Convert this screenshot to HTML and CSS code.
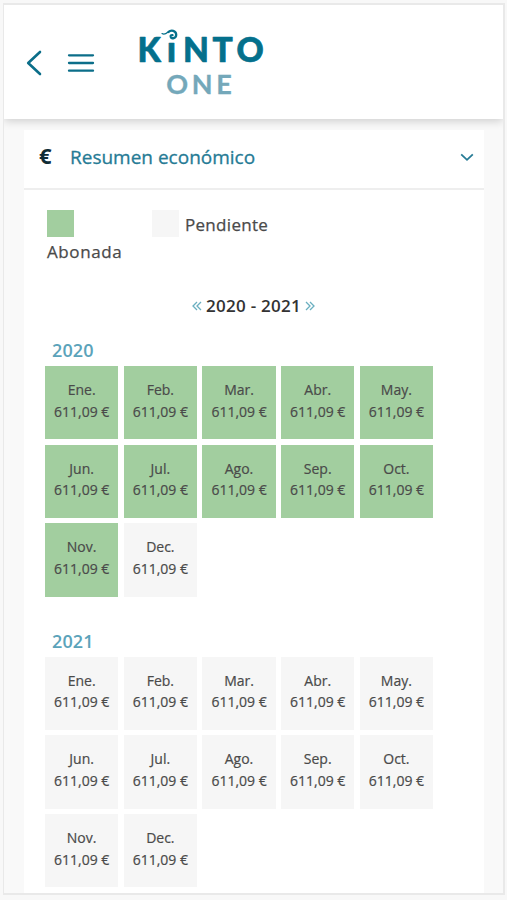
FILE: index.html
```
<!DOCTYPE html>
<html lang="es">
<head>
<meta charset="utf-8">
<title>Kinto One</title>
<link rel="stylesheet" href="styles.css">
</head>
<body>
<div class="frame">
  <header class="header">
    <svg class="back" width="16" height="26" viewBox="0 0 16 26"><path d="M14 2 2.2 13 14 24"/></svg>
    <svg class="menu" width="28" height="22" viewBox="0 0 28 22"><path d="M2 3.3h24M2 11h24M2 18.7h24"/></svg>
    <svg class="logo" width="140" height="76" viewBox="0 0 140 76">
      <text class="kinto" x="3.6 32.8 49 78.500 102.600" y="37.800">K<tspan class="logo-i">ı</tspan>NTO</text>
      <path class="curl-tail" d="M28 9.600c3.500 2 5.500-1.600 7-2.400"/>
      <path class="curl" d="M34.500 8c2.500-2.400 7.500-1.600 7.700 2.600.1 3.800-4.700 4.700-5.500 2.200-.3-1.200.6-2 1.800-1.700"/>
      <text class="one" x="32.300 57.800 82.300" y="69.500">ONE</text>
    </svg>
  </header>
  <main class="card">
    <div class="summary">
      <span class="euro">€</span>
      <h1 class="title">Resumen económico</h1>
      <svg class="chevron" width="14" height="10" viewBox="0 0 14 10"><path d="m1.200 2.300 5.800 5.500 5.800-5.500"/></svg>
    </div>
    <div class="legend">
      <div class="legend-paid"><i class="swatch paid"></i><span class="label-paid">Abonada</span></div>
      <div class="legend-pending"><i class="swatch"></i><span class="label-pending">Pendiente</span></div>
    </div>
    <div class="range">
      <svg width="10" height="10" viewBox="0 0 10 10"><path d="M5 1 1 5l4 4M9 1 5 5l4 4"/></svg>
      <span class="years">2020 - 2021</span>
      <svg width="10" height="10" viewBox="0 0 10 10"><path d="m1 1 4 4-4 4M5 1l4 4-4 4"/></svg>
    </div>
    <h2 class="year">2020</h2>
    <div class="grid">
      <div class="tile paid">Ene.<b>611,09 €</b></div>
      <div class="tile paid">Feb.<b>611,09 €</b></div>
      <div class="tile paid">Mar.<b>611,09 €</b></div>
      <div class="tile paid">Abr.<b>611,09 €</b></div>
      <div class="tile paid">May.<b>611,09 €</b></div>
      <div class="tile paid">Jun.<b>611,09 €</b></div>
      <div class="tile paid">Jul.<b>611,09 €</b></div>
      <div class="tile paid">Ago.<b>611,09 €</b></div>
      <div class="tile paid">Sep.<b>611,09 €</b></div>
      <div class="tile paid">Oct.<b>611,09 €</b></div>
      <div class="tile paid">Nov.<b>611,09 €</b></div>
      <div class="tile">Dec.<b>611,09 €</b></div>
    </div>
    <h2 class="year second">2021</h2>
    <div class="grid">
      <div class="tile">Ene.<b>611,09 €</b></div>
      <div class="tile">Feb.<b>611,09 €</b></div>
      <div class="tile">Mar.<b>611,09 €</b></div>
      <div class="tile">Abr.<b>611,09 €</b></div>
      <div class="tile">May.<b>611,09 €</b></div>
      <div class="tile">Jun.<b>611,09 €</b></div>
      <div class="tile">Jul.<b>611,09 €</b></div>
      <div class="tile">Ago.<b>611,09 €</b></div>
      <div class="tile">Sep.<b>611,09 €</b></div>
      <div class="tile">Oct.<b>611,09 €</b></div>
      <div class="tile">Nov.<b>611,09 €</b></div>
      <div class="tile">Dec.<b>611,09 €</b></div>
    </div>
  </main>
</div>
</body>
</html>
```
FILE: styles.css
```
* { box-sizing: border-box; }
body {
  margin: 0;
  padding: 3px 2px 4px 3px;
  height: 900px;
  overflow: hidden;
  background: #f8f8f8;
  font-family: "Open Sans", "Noto Sans", sans-serif;
  color: #4a4a4a;
}
.frame {
  height: 892px;
  border: 2px solid #e9e9e9;
  border-left-width: 1px;
  background: #f9f9f9;
  overflow: hidden;
}
.header {
  display: flex;
  height: 114px;
  padding-left: 22px;
  background: #fff;
  box-shadow: 0 2px 9px rgba(0, 0, 0, .18);
  position: relative;
}
svg { display: block; fill: none; flex: none; }
.back { margin-top: 45px; stroke: #0b6e89; stroke-width: 2.6; stroke-linecap: round; stroke-linejoin: round; }
.menu { margin: 47px 0 0 25px; stroke: #0b6e89; stroke-width: 2.3; stroke-linecap: round; }
.logo { margin: 19px 0 0 39px; }
.kinto { fill: #04708c; stroke: #04708c; stroke-width: .7; stroke-linejoin: round; font: 900 33.5px Lato, sans-serif; }
.logo-i { font-size: 36px; }
.curl { stroke: #04708c; stroke-width: 2.3; stroke-linecap: round; }
.curl-tail { stroke: #04708c; stroke-width: 1.2; stroke-linecap: round; }
.one { fill: #74a8ba; stroke: #74a8ba; stroke-width: .3; font: 700 27px Lato, sans-serif; }
.card { width: 460px; height: 764px; margin: 11px 0 0 20px; background: #fff; }
.summary {
  display: flex;
  align-items: center;
  height: 60px;
  padding: 0 10px 5px 15px;
  border-bottom: 2px solid #eee;
}
.euro { width: 31px; padding-bottom: 3px; font-size: 22px; font-weight: 700; color: #102c36; line-height: 30px; }
.title { margin: 0; font-size: 19px; font-weight: 500; line-height: 30px; color: #267b95; -webkit-text-stroke: .3px; }
.chevron { margin-left: auto; stroke: #267b95; stroke-width: 1.8; }
.legend { display: flex; height: 92px; padding: 20px 0 0 23px; font-size: 17px; font-weight: 500; line-height: 28px; letter-spacing: .3px; -webkit-text-stroke: .25px; }
.legend-paid { width: 105px; }
.legend-pending { display: flex; gap: 6px; }
.swatch { display: block; width: 27px; height: 27px; background: #f6f6f6; }
.label-paid { display: block; padding-top: 1px; letter-spacing: .6px; }
.label-pending { padding-top: 1px; }
.range { display: flex; align-items: center; justify-content: center; gap: 4px; height: 46px; width: 459px; font-size: 17px; font-weight: 600; color: #333; }
.years { letter-spacing: .25px; }
.range svg { stroke: #6aafc0; stroke-width: 1.3; margin-top: 2px; }
.year { margin: 8px 0 0 28px; height: 30px; font-size: 18px; font-weight: 600; line-height: 28px; letter-spacing: .1px; color: #5ba3ba; }
.second { margin-top: 30px; }
.grid { display: grid; grid-template-columns: repeat(5, 73.3px); grid-auto-rows: 73.3px; gap: 5.4px; margin-left: 21px; }
.tile { padding-top: 13px; background: #f6f6f6; text-align: center; font-size: 14px; font-weight: 500; line-height: 21.500px; white-space: nowrap; -webkit-text-stroke: .2px; }
.tile b { display: block; font-weight: 500; }
.paid { background: #a2ce9f; }
```
